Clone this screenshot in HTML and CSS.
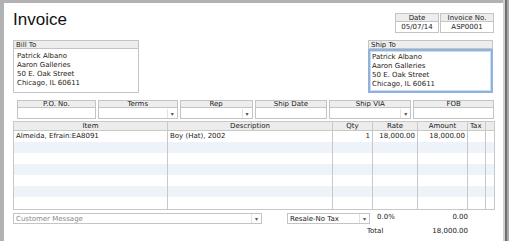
FILE: index.html
```html
<!DOCTYPE html>
<html lang="en">
<head>
    <meta charset="UTF-8">
    <title>Invoice</title>
    <link rel="stylesheet" href="styles.css">
</head>
<body>
    <div class="sheet">
        <div class="top-row">
            <h1 class="title">Invoice</h1>
            <div class="meta">
                <div class="meta-col date-col">
                    <div class="label">Date</div>
                    <div class="value">05/07/14</div>
                </div>
                <div class="meta-col num-col">
                    <div class="label">Invoice No.</div>
                    <div class="value">ASP0001</div>
                </div>
            </div>
        </div>

        <div class="address-row">
            <div class="address">
                <div class="label left">Bill To</div>
                <div class="address-body">
                    Patrick Albano<br>
                    Aaron Galleries<br>
                    50 E. Oak Street<br>
                    Chicago, IL 60611
                </div>
            </div>
            <div class="address ship">
                <div class="label left">Ship To</div>
                <div class="address-body focused">
                    Patrick Albano<br>
                    Aaron Galleries<br>
                    50 E. Oak Street<br>
                    Chicago, IL 60611
                </div>
            </div>
        </div>

        <div class="fields">
            <div class="field w-po"><div class="label">P.O. No.</div><div class="input"></div></div>
            <div class="field w-terms"><div class="label">Terms</div><div class="input select"><span class="arrow">▾</span></div></div>
            <div class="field w-rep"><div class="label">Rep</div><div class="input select"><span class="arrow">▾</span></div></div>
            <div class="field w-date"><div class="label">Ship Date</div><div class="input"></div></div>
            <div class="field w-via"><div class="label">Ship VIA</div><div class="input select"><span class="arrow">▾</span></div></div>
            <div class="field w-fob"><div class="label">FOB</div><div class="input"></div></div>
        </div>

        <div class="items">
            <div class="row head">
                <div>Item</div><div>Description</div><div>Qty</div><div>Rate</div><div>Amount</div><div class="left">Tax</div><div></div>
            </div>
            <div class="row">
                <div class="left">Almeida, Efrain:EA8091</div><div class="left">Boy (Hat), 2002</div><div class="num">1</div><div class="num">18,000.00</div><div class="num">18,000.00</div><div></div><div></div>
            </div>
            <div class="row alt"><div></div><div></div><div></div><div></div><div></div><div></div><div></div></div>
            <div class="row"><div></div><div></div><div></div><div></div><div></div><div></div><div></div></div>
            <div class="row alt"><div></div><div></div><div></div><div></div><div></div><div></div><div></div></div>
            <div class="row"><div></div><div></div><div></div><div></div><div></div><div></div><div></div></div>
            <div class="row alt"><div></div><div></div><div></div><div></div><div></div><div></div><div></div></div>
            <div class="row last"><div></div><div></div><div></div><div></div><div></div><div></div><div></div></div>
        </div>

        <div class="bottom-row">
            <div class="input select message"><span class="placeholder">Customer Message</span><span class="arrow">▾</span></div>
            <div class="input select tax"><span>Resale-No Tax</span><span class="arrow">▾</span></div>
            <div class="pct">0.0%</div>
            <div class="amt">0.00</div>
        </div>
        <div class="total-row">
            <div class="total-label">Total</div>
            <div class="amt">18,000.00</div>
        </div>
    </div>
</body>
</html>
```

FILE: styles.css
```css
body {
    margin: 0;
    height: 241px;
    overflow: hidden;
    font-family: 'DejaVu Sans', sans-serif;
    font-size: 7px;
    color: #1a1a1a;
    background: linear-gradient(to right, #b2b2b2 0, #b2b2b2 503px, #d0d0d0 503px, #d0d0d0 505px, #6e6e6e 505px, #6e6e6e 507px, #a9a9a9 507px);
}
.sheet {
    margin: 3px 0 0 4px;
    width: 481px;
    height: 238px;
    padding: 10px 9px 0 9px;
    background: #fff;
    box-sizing: content-box;
}
.top-row {
    display: flex;
    justify-content: space-between;
    height: 20px;
}
.title {
    margin: 0;
    font-family: 'Liberation Sans', sans-serif;
    font-weight: normal;
    font-size: 17px;
    line-height: 14px;
    color: #111;
}
.meta {
    display: flex;
    gap: 1px;
}
.meta-col {
    display: flex;
    flex-direction: column;
}
.date-col { width: 44px; }
.num-col { width: 54px; }
.label {
    height: 9px;
    line-height: 9px;
    text-align: center;
    background: #ededed;
    border: 1px solid #c4c4c4;
    box-sizing: border-box;
    white-space: nowrap;
    overflow: hidden;
}
.label.left {
    text-align: left;
    padding-left: 2px;
}
.meta .value {
    height: 11px;
    line-height: 10px;
    text-align: center;
    border: 1px solid #c4c4c4;
    border-top: none;
    box-sizing: border-box;
}
.address-row {
    display: flex;
    justify-content: space-between;
    margin-top: 7px;
    height: 53px;
}
.address { width: 126px; }
.address.ship { width: 125px; margin-right: 1px; }
.address-body {
    height: 44px;
    border: 1px solid #c4c4c4;
    border-top: none;
    box-sizing: border-box;
    padding: 3px 3px;
    line-height: 9px;
    color: #2a1a10;
}
.address-body.focused {
    border: 2px solid #8fb3dc;
    box-shadow: inset 0 0 0 1px #c9dcf1;
    padding: 2px 2px;
}
.fields {
    display: flex;
    gap: 2px;
    margin: 7px 0 0 4px;
    height: 19px;
}
.field { display: flex; flex-direction: column; }
.field .label { height: 8px; line-height: 7px; }
.w-po { width: 79px; }
.w-terms { width: 80px; }
.w-rep { width: 73px; }
.w-date { width: 73px; }
.w-via { width: 82px; }
.w-fob { width: 81px; }
.input {
    height: 11px;
    border: 1px solid #c4c4c4;
    border-top: none;
    box-sizing: border-box;
    display: flex;
    align-items: center;
    justify-content: space-between;
    background: #fff;
}
.select { justify-content: flex-end; }
.arrow {
    width: 9px;
    text-align: center;
    font-size: 6px;
    color: #555;
    border-left: 1px solid #e2e2e2;
    line-height: 9px;
}
.items {
    margin-top: 2px;
    width: 482px;
    border: 1px solid #c8c8c8;
    border-top: none;
    box-sizing: border-box;
}
.row {
    display: grid;
    grid-template-columns: 154px 165px 40px 45px 50px 18px 1fr;
    height: 11px;
    line-height: 11px;
}
.row > div {
    border-right: 1px solid #c8c8c8;
    overflow: hidden;
    white-space: nowrap;
    padding: 0 2px;
}
.row > div:last-child { border-right: none; }
.row.head {
    height: 8px;
    line-height: 8px;
    background: #ececec;
    border-top: 1px solid #c8c8c8;
    border-bottom: 1px solid #c8c8c8;
    box-sizing: content-box;
}
.row.head > div { text-align: center; }
.row.head > div.left { text-align: left; }
.row .num { text-align: right; }
.row.alt { background: #eef3fa; }
.row.last { height: 12px; }
.bottom-row {
    display: flex;
    align-items: center;
    margin-top: 3px;
    height: 11px;
}
.bottom-row .input { border: 1px solid #c4c4c4; }
.message {
    width: 249px;
    justify-content: space-between;
    padding-left: 2px;
}
.placeholder { color: #8a8a8a; }
.tax {
    width: 83px;
    margin-left: 25px;
    justify-content: space-between;
    padding-left: 2px;
}
.pct {
    margin-left: 7px;
    width: 40px;
    line-height: 9px;
    align-self: flex-start;
}
.amt {
    width: 51px;
    text-align: right;
}
.bottom-row .amt { align-self: flex-start; line-height: 9px; }
.total-row {
    display: flex;
    margin-top: 2px;
    padding-left: 354px;
    height: 10px;
    line-height: 10px;
}
.total-label { width: 50px; }
```
